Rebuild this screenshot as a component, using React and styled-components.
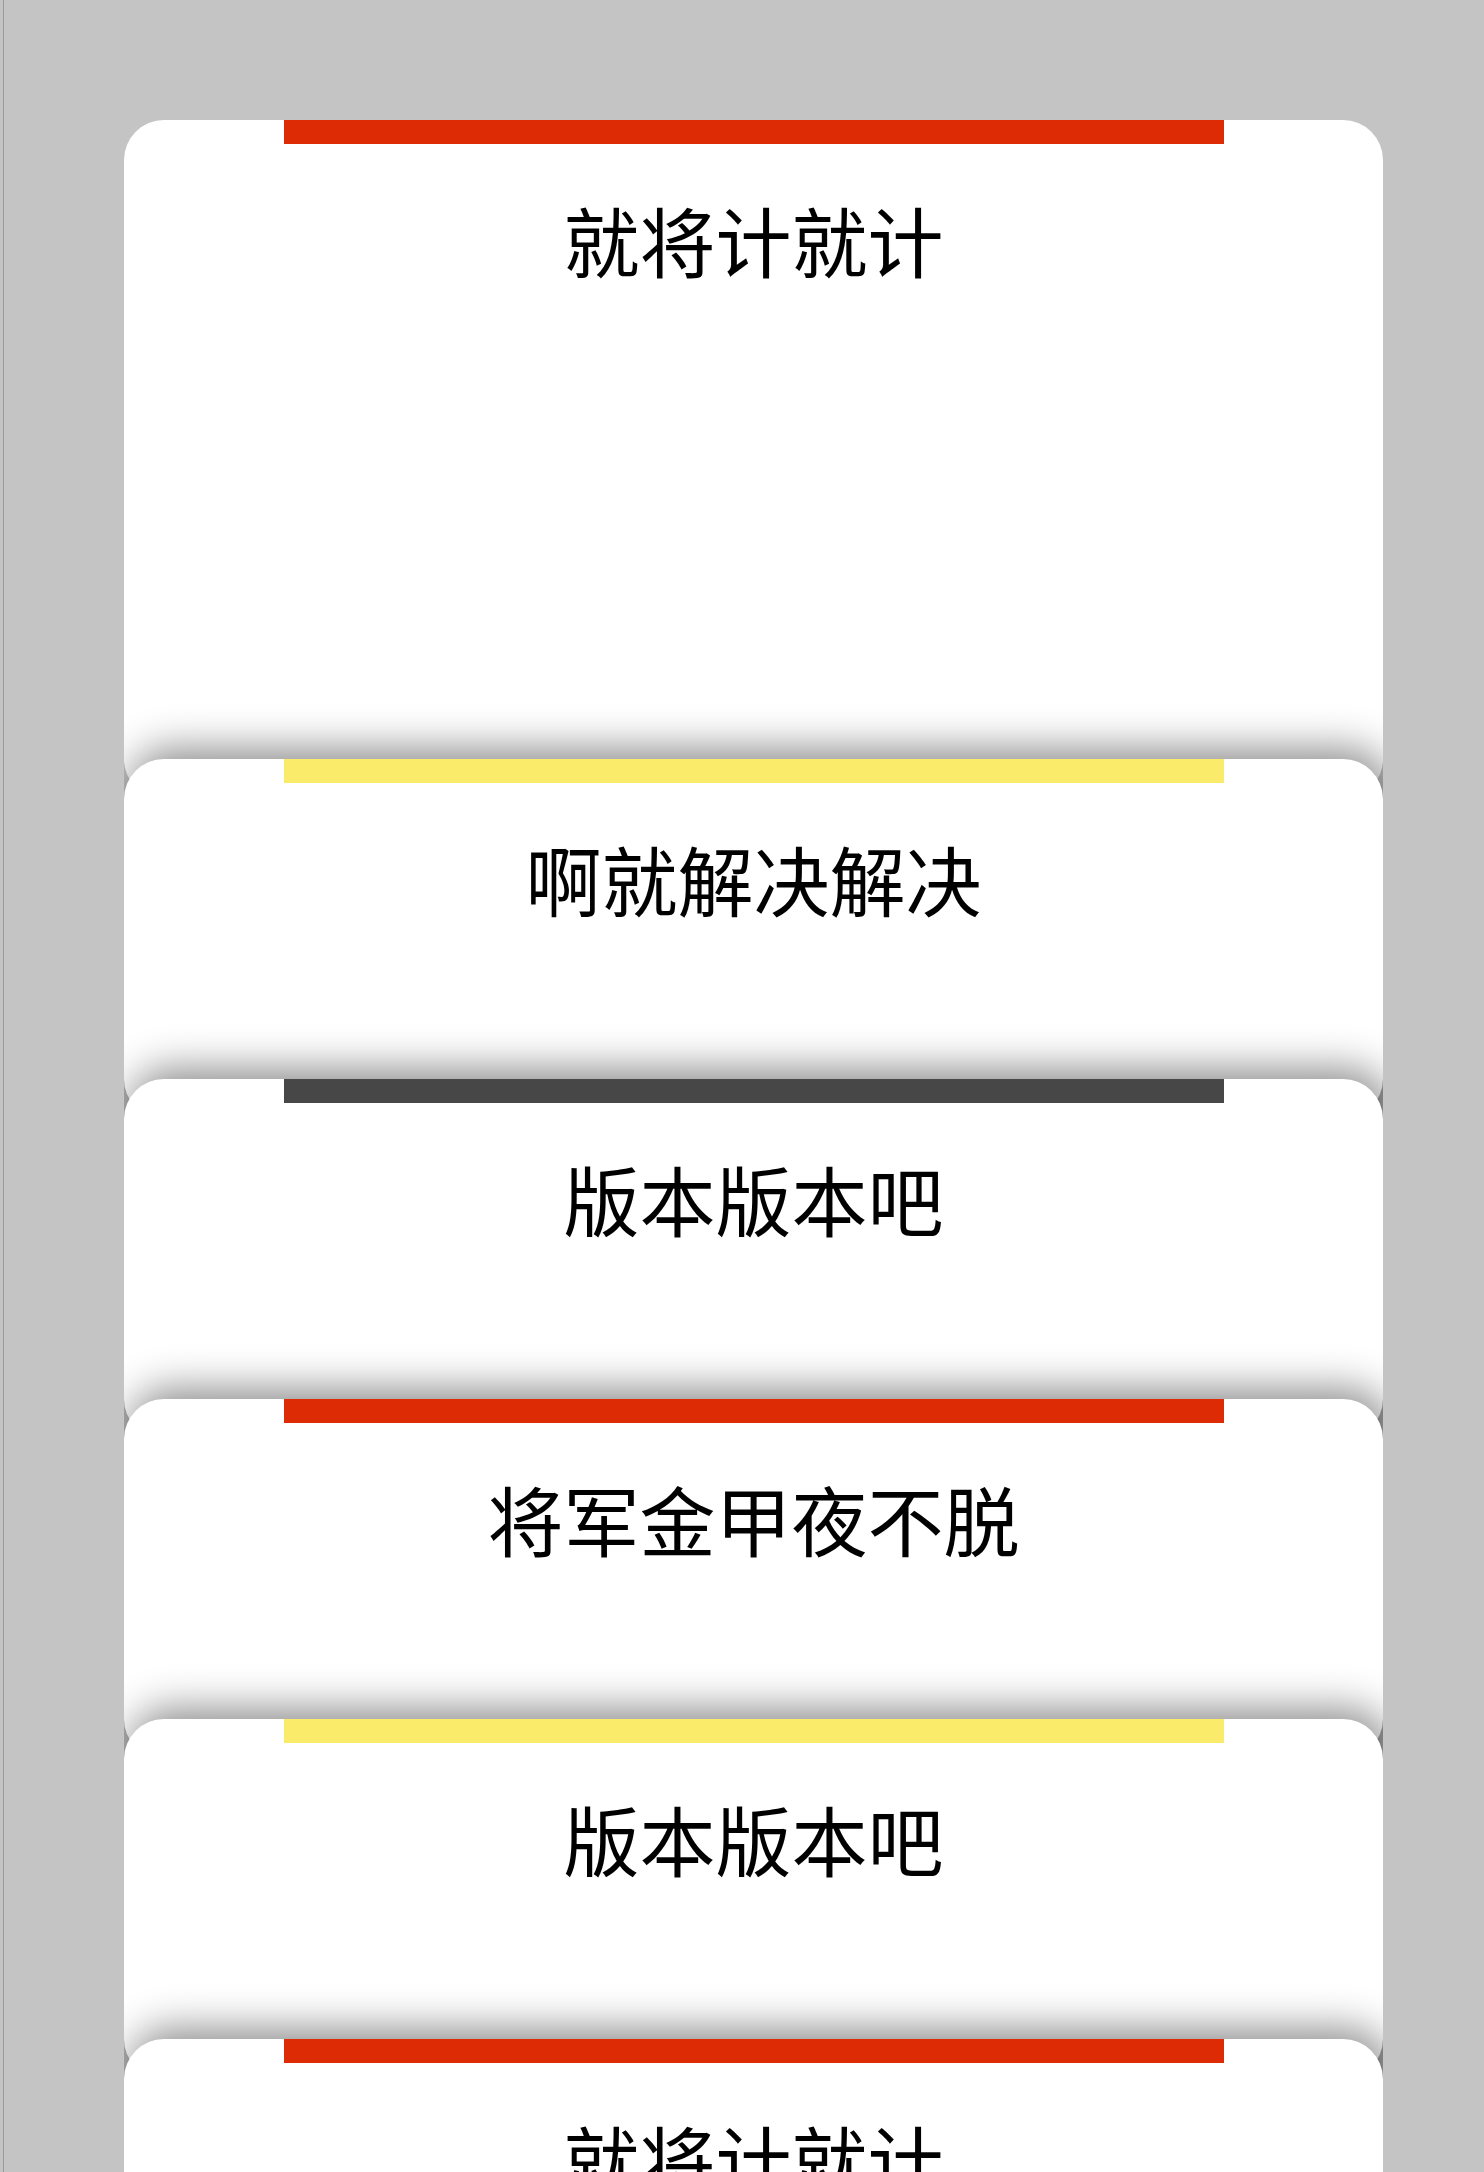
import React from 'react';
import styled, { createGlobalStyle } from 'styled-components';

const GlobalStyle = createGlobalStyle`
  html, body {
    margin: 0;
    padding: 0;
    background: #c4c4c4;
  }
  body {
    font-family: "Noto Sans CJK SC", "Noto Sans", sans-serif;
  }
`;

const Page = styled.div`
  height: 100vh;
  overflow: hidden;
  background: #c4c4c4;
  border-left: 1px solid #9a9a9a;
  margin-left: 3px;
  padding-top: 120px;
  box-sizing: border-box;
`;

/* the column clips the card shadows so they only fall on the card below */
const Stack = styled.div`
  display: flex;
  flex-direction: column;
  width: 1259px;
  margin-left: 120px;
  overflow: hidden;
`;

const Card = styled.div`
  position: relative;
  display: flex;
  flex-direction: column;
  align-items: center;
  flex-shrink: 0;
  height: ${(p) => (p.$first ? 679 : 360)}px;
  margin-top: ${(p) => (p.$first ? 0 : -40)}px;
  background: #fff;
  border-radius: 40px;
  box-shadow: ${(p) => (p.$first ? 'none' : '6px -10px 40px rgba(0, 0, 0, 0.45)')};
`;

const Stripe = styled.div`
  width: 940px;
  height: 24px;
  background: ${(p) => p.$color};
`;

const Title = styled.div`
  margin-top: 45px;
  font-size: 76px;
  line-height: 100px;
  color: #000;
`;

const RED = '#dc2b05';
const YELLOW = '#fbeb6b';
const DARK = '#474747';

const cards = [
  { title: '就将计就计', color: RED },
  { title: '啊就解决解决', color: YELLOW },
  { title: '版本版本吧', color: DARK },
  { title: '将军金甲夜不脱', color: RED },
  { title: '版本版本吧', color: YELLOW },
  { title: '就将计就计', color: RED },
];

export default function App() {
  return (
    <>
      <GlobalStyle />
      <Page>
        <Stack>
          {cards.map((c, i) => (
            <Card key={i} $first={i === 0}>
              <Stripe $color={c.color} />
              <Title>{c.title}</Title>
            </Card>
          ))}
        </Stack>
      </Page>
    </>
  );
}
